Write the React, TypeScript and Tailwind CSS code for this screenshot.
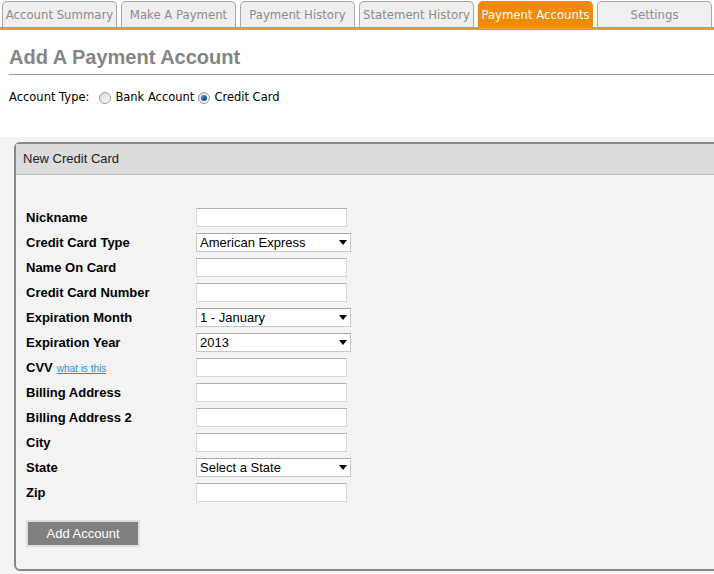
import React, { useState } from 'react';

const tabs = [
  'Account Summary',
  'Make A Payment',
  'Payment History',
  'Statement History',
  'Payment Accounts',
  'Settings',
];

type Field = {
  label: string;
  kind: 'text' | 'select';
  options?: string[];
  help?: boolean;
};

const fields: Field[] = [
  { label: 'Nickname', kind: 'text' },
  { label: 'Credit Card Type', kind: 'select', options: ['American Express', 'Visa', 'MasterCard', 'Discover'] },
  { label: 'Name On Card', kind: 'text' },
  { label: 'Credit Card Number', kind: 'text' },
  { label: 'Expiration Month', kind: 'select', options: ['1 - January', '2 - February', '3 - March'] },
  { label: 'Expiration Year', kind: 'select', options: ['2013', '2014', '2015'] },
  { label: 'CVV', kind: 'text', help: true },
  { label: 'Billing Address', kind: 'text' },
  { label: 'Billing Address 2', kind: 'text' },
  { label: 'City', kind: 'text' },
  { label: 'State', kind: 'select', options: ['Select a State'] },
  { label: 'Zip', kind: 'text' },
];

// Small radio circle, drawn to look like the old XP style radio
function Radio({ checked, onClick }: { checked: boolean; onClick: () => void }) {
  return (
    <span
      onClick={onClick}
      className="inline-flex items-center justify-center w-[12px] h-[12px] rounded-full border border-[#9a9a9a] bg-gradient-to-br from-[#d8d8d8] to-[#ffffff] mr-[4px] cursor-pointer"
    >
      {checked && (
        <span className="w-[6px] h-[6px] rounded-full bg-gradient-to-br from-[#4aa0d8] to-[#0a3a66]" />
      )}
    </span>
  );
}

function SelectBox({ options }: { options: string[] }) {
  return (
    <div className="relative w-[155px] h-[19px]">
      <select
        defaultValue={options[0]}
        className="block appearance-none w-full h-full bg-white border border-[#c8c8c8] border-t-[#a8a8a8] pl-[3px] text-[13px] leading-[17px] text-black outline-none"
        style={{ fontFamily: '"Liberation Sans", Arial, sans-serif' }}
      >
        {options.map((o) => (
          <option key={o}>{o}</option>
        ))}
      </select>
      <svg
        className="absolute right-[4px] top-[7px] pointer-events-none"
        width="8"
        height="5"
        viewBox="0 0 8 5"
      >
        <path d="M0 0 L8 0 L4 5 Z" fill="#000" />
      </svg>
    </div>
  );
}

export default function App() {
  const [accountType, setAccountType] = useState<'bank' | 'card'>('card');

  return (
    <div className="w-full min-h-[574px] overflow-hidden bg-white">
      {/* Tabs */}
      <div className="flex gap-[4px] pl-[2px] pt-[1px] border-b-[3px] border-[#f0952a]">
        {tabs.map((t) => {
          const active = t === 'Payment Accounts';
          return (
            <div
              key={t}
              className={`w-[115px] h-[26px] flex items-center justify-center rounded-t-[5px] border border-b-0 text-[13px] ${
                active
                  ? 'bg-[#ee8a0c] border-[#ee8a0c] text-white'
                  : 'bg-[#efefef] border-[#a8a8a8] text-[#8c8c8c]'
              }`}
              style={{ fontFamily: '"DejaVu Sans Condensed", "DejaVu Sans", sans-serif' }}
            >
              {t}
            </div>
          );
        })}
      </div>

      {/* Heading + account type */}
      <div className="h-[107px] pt-[15px]">
        <div className="ml-[9px] pb-[5px] border-b border-[#999]">
          <h1
            className="text-[20px] leading-[24px] font-bold text-[#858585]"
            style={{ fontFamily: '"Liberation Sans", Arial, sans-serif' }}
          >
            Add A Payment Account
          </h1>
        </div>
        <div
          className="flex items-center ml-[9px] mt-[14px] text-[11.5px] text-black"
          style={{ fontFamily: '"DejaVu Sans", Tahoma, sans-serif' }}
        >
          <span className="mr-[10px]">Account Type:</span>
          <Radio checked={accountType === 'bank'} onClick={() => setAccountType('bank')} />
          <span className="mr-[4px]">Bank Account</span>
          <Radio checked={accountType === 'card'} onClick={() => setAccountType('card')} />
          <span>Credit Card</span>
        </div>
      </div>

      {/* Form panel */}
      <div className="bg-[#f4f4f4] pt-[5px] pl-[14px] pb-[4px]">
        <div className="w-[730px] border-2 border-[#888] rounded-[6px]">
          <div
            className="h-[31px] flex items-center pl-[7px] bg-[#dcdcdc] border-b border-[#bdbdbd] text-[13px] text-[#222]"
            style={{ fontFamily: '"Liberation Sans", Arial, sans-serif' }}
          >
            New Credit Card
          </div>
          <div className="pl-[10px] pt-[30px] pb-[22px]">
            {fields.map((f) => (
              <div key={f.label} className="flex items-center h-[25px]">
                <div
                  className="w-[170px] text-[13px] font-bold text-black"
                  style={{ fontFamily: '"Liberation Sans", Arial, sans-serif' }}
                >
                  {f.label}
                  {f.help && (
                    <a
                      href="#"
                      className="ml-[4px] text-[10px] font-normal text-[#2a8fd8] underline"
                    >
                      what is this
                    </a>
                  )}
                </div>
                {f.kind === 'text' ? (
                  <input
                    type="text"
                    className="block w-[151px] h-[19px] bg-white border border-[#d8d8d8] border-t-[#b0b0b0] outline-none"
                  />
                ) : (
                  <SelectBox options={f.options ?? []} />
                )}
              </div>
            ))}
            <button
              className="mt-[15px] w-[114px] h-[27px] bg-[#808080] border-2 border-[#dedede] text-white text-[13px]"
              style={{ fontFamily: '"Liberation Sans", Arial, sans-serif' }}
            >
              Add Account
            </button>
          </div>
        </div>
      </div>
    </div>
  );
}
